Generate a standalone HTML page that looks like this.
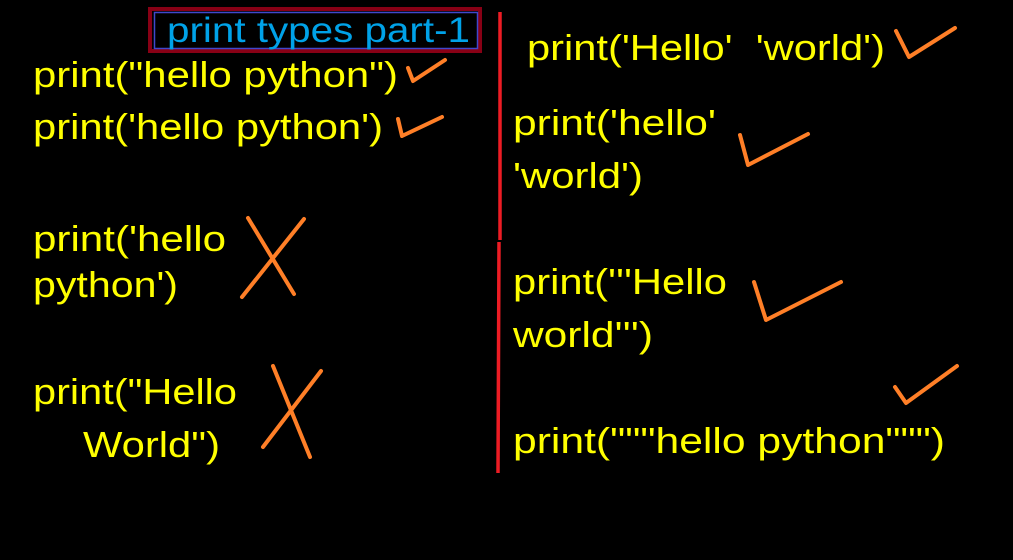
<!DOCTYPE html>
<html><head><meta charset="utf-8"><style>
html,body{margin:0;padding:0;background:#000;width:1013px;height:560px;overflow:hidden}
svg{display:block}
text{font-family:"Liberation Sans",sans-serif;font-size:36px;fill:#ffff00;white-space:pre}
</style></head><body>
<svg width="1013" height="560" viewBox="0 0 1013 560" xmlns="http://www.w3.org/2000/svg">
<rect width="1013" height="560" fill="#000"/>
<rect x="150" y="9" width="330" height="42" fill="none" stroke="#880015" stroke-width="4"/>
<rect x="154.5" y="12.5" width="323" height="36" fill="none" stroke="#3f48cc" stroke-width="1.5"/>
<text x="167" y="42" textLength="303" lengthAdjust="spacingAndGlyphs" style="fill:#00a2e8;font-size:35px">print types part-1</text>

<text x="33" y="87" textLength="365" lengthAdjust="spacingAndGlyphs">print("hello python")</text>
<text x="33" y="139" textLength="350" lengthAdjust="spacingAndGlyphs">print('hello python')</text>
<text x="33" y="251" textLength="193" lengthAdjust="spacingAndGlyphs">print('hello</text>
<text x="33" y="297" textLength="145" lengthAdjust="spacingAndGlyphs">python')</text>
<text x="33" y="404" textLength="204" lengthAdjust="spacingAndGlyphs">print("Hello</text>
<text x="83" y="457" textLength="137" lengthAdjust="spacingAndGlyphs">World")</text>

<text x="527" y="60" textLength="358" lengthAdjust="spacingAndGlyphs">print('Hello'  'world')</text>
<text x="513" y="135" textLength="203" lengthAdjust="spacingAndGlyphs">print('hello'</text>
<text x="513" y="188" textLength="130" lengthAdjust="spacingAndGlyphs">'world')</text>
<text x="513" y="294" textLength="214" lengthAdjust="spacingAndGlyphs">print('''Hello</text>
<text x="513" y="347" textLength="140" lengthAdjust="spacingAndGlyphs">world''')</text>
<text x="513" y="453" textLength="432" lengthAdjust="spacingAndGlyphs">print("""hello python""")</text>

<path d="M500 12 L500 240 M499 242 L498 473" stroke="#ed1c24" stroke-width="3.5" fill="none"/>

<g stroke="#ff7f27" stroke-width="4" fill="none" stroke-linecap="round" stroke-linejoin="round">
<path d="M408 68 L413 81 L445 60"/>
<path d="M398 119 L402 136 L442 117"/>
<path d="M242 297 L304 219 M248 218 L294 294"/>
<path d="M263 447 L321 371 M273 366 L310 457"/>
<path d="M896 31 L909 57 L955 28"/>
<path d="M740 135 L748 165 L808 134"/>
<path d="M754 282 L766 320 L841 282"/>
<path d="M895 387 L906 403 L957 366"/>
</g>
</svg>
</body></html>
